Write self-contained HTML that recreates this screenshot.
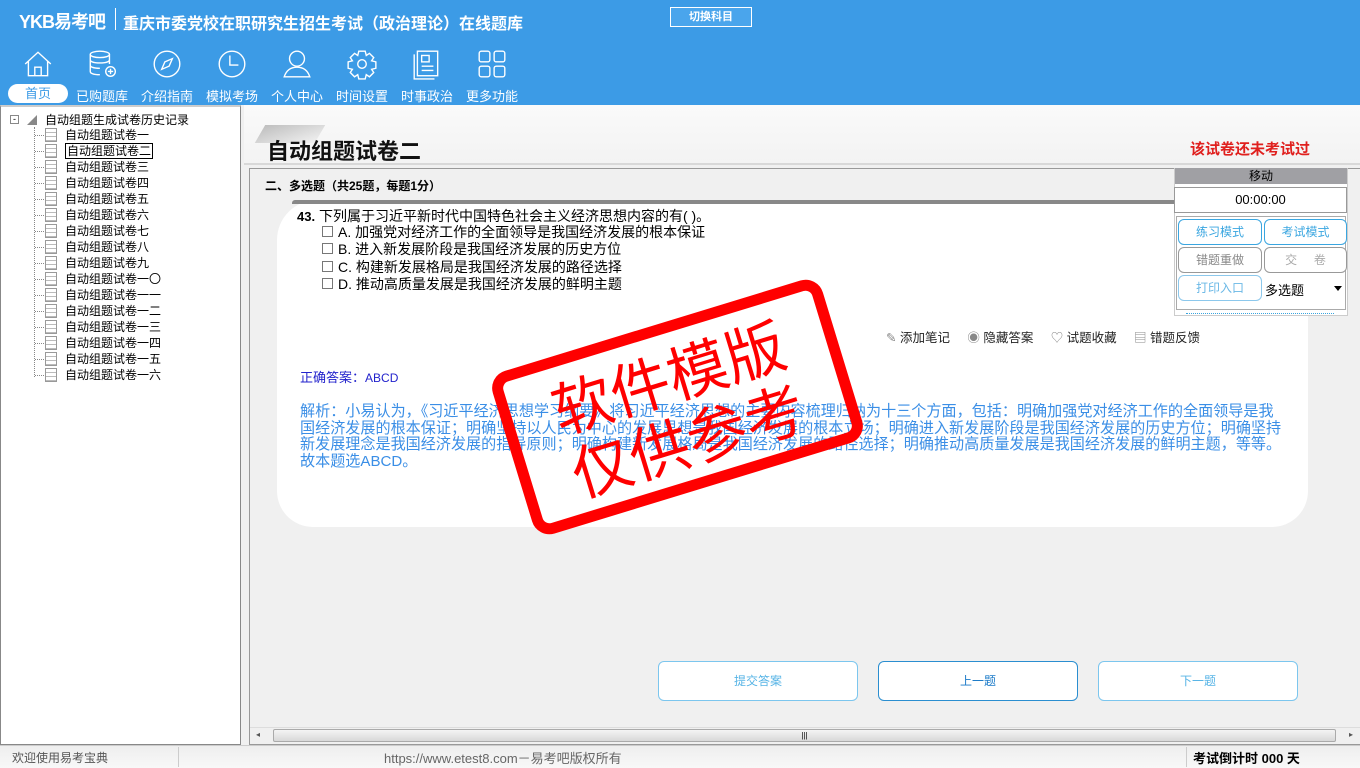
<!DOCTYPE html>
<html><head><meta charset="utf-8"><style>
*{margin:0;padding:0;box-sizing:border-box}
body{width:1360px;height:768px;overflow:hidden;position:relative;background:#f0f0f0;font-family:"Liberation Sans","Noto Sans CJK SC",sans-serif;font-size:12px;color:#000}
.abs{position:absolute}
#hdr{left:0;top:0;width:1360px;height:105px;background:#3c9be6;color:#fff}
.nav{position:absolute;top:48px;text-align:center;width:64px;font-size:13px}
.nav svg{display:block;margin:0 auto 6px;width:32px;height:32px}
#left{left:0;top:105px;width:241px;height:640px;background:#fff;border:1px solid #888;border-top:2px solid #ccc}
.tr{position:absolute;left:44px;font-size:12px;height:16px;line-height:16px;white-space:nowrap}
.tr i{display:inline-block;width:12px;height:14px;border:1px solid #999;background:repeating-linear-gradient(#fff 0 3px,#bbb 3px 4px);vertical-align:-3px;margin-right:8px}
.tr:before{content:"";position:absolute;left:-10px;top:8px;width:9px;border-top:1px dotted #888}
.btn{position:absolute;border:1px solid #3aa6e0;border-radius:6px;background:#fff;color:#3aa6e0;text-align:center;font-size:12px}
.ex{color:#3a8ee6;font-size:15.1px;white-space:nowrap;line-height:16.5px}
</style></head><body>
<div id="hdr" class="abs">
 <div class="abs" style="left:19px;top:8px;font-size:18px;font-weight:bold;letter-spacing:-1px">YKB易考吧</div>
 <div class="abs" style="left:115px;top:8px;width:1px;height:22px;background:#fff"></div>
 <div class="abs" style="left:123px;top:10px;font-size:16px;font-weight:bold">重庆市委党校在职研究生招生考试（政治理论）在线题库</div>
 <div class="abs" style="left:670px;top:7px;width:82px;height:20px;border:1px solid #fff;background:#4aa5ec;font-size:11px;text-align:center;line-height:18px;font-weight:bold">切换科目</div>
 <div class="abs" style="left:8px;top:84px;width:60px;height:19px;background:#fff;border-radius:10px;color:#3c9be6;text-align:center;line-height:19px;font-size:13px">首页</div>
 <div class="nav" style="left:6px"><svg viewBox="0 0 30 30" fill="none" stroke="#fff" stroke-width="1.3"><path d="M3 15L15 4l12 11M6 12.5V26h18V12.5M12 26v-8h6v8"/></svg><span style="visibility:hidden">首页</span></div>
 <div class="nav" style="left:70px"><svg viewBox="0 0 30 30" fill="none" stroke="#fff" stroke-width="1.3"><ellipse cx="13" cy="6" rx="9" ry="3"/><path d="M4 6v16c0 2 4 3 9 3M22 6v9M4 11c0 2 4 3 9 3s9-1 9-3M4 16c0 2 4 3 9 3"/><circle cx="23" cy="22" r="4.5"/><path d="M23 19.5v5M20.5 22h5"/></svg>已购题库</div>
 <div class="nav" style="left:135px"><svg viewBox="0 0 30 30" fill="none" stroke="#fff" stroke-width="1.3"><circle cx="15" cy="15" r="12"/><path d="M20 10l-3 7-7 3 3-7z"/></svg>介绍指南</div>
 <div class="nav" style="left:200px"><svg viewBox="0 0 30 30" fill="none" stroke="#fff" stroke-width="1.3"><circle cx="15" cy="15" r="12"/><path d="M13 7v9h8"/></svg>模拟考场</div>
 <div class="nav" style="left:265px"><svg viewBox="0 0 30 30" fill="none" stroke="#fff" stroke-width="1.3"><circle cx="15" cy="10" r="7"/><path d="M3 27c2-6 6-9 12-9s10 3 12 9z"/></svg>个人中心</div>
 <div class="nav" style="left:330px"><svg viewBox="0 0 30 30" fill="none" stroke="#fff" stroke-width="1.3"><path d="M12 3h6l1 4 3-2 4 4-2 3 4 1v6l-4 1 2 3-4 4-3-2-1 4h-6l-1-4-3 2-4-4 2-3-4-1v-6l4-1-2-3 4-4 3 2z"/><circle cx="15" cy="15" r="4"/></svg>时间设置</div>
 <div class="nav" style="left:395px"><svg viewBox="0 0 30 30" fill="none" stroke="#fff" stroke-width="1.3"><rect x="6" y="3" width="19" height="23"/><rect x="10" y="7" width="7" height="6"/><path d="M10 17h11M10 21h11M3 6v23h19"/></svg>时事政治</div>
 <div class="nav" style="left:460px"><svg viewBox="0 0 30 30" fill="none" stroke="#fff" stroke-width="1.3"><rect x="3" y="3" width="10" height="10" rx="2"/><rect x="17" y="3" width="10" height="10" rx="2"/><rect x="3" y="17" width="10" height="10" rx="2"/><rect x="17" y="17" width="10" height="10" rx="2"/></svg>更多功能</div>
</div>

<div id="left" class="abs">
 <div class="abs" style="left:9px;top:8px;width:9px;height:9px;border:1px solid #888;font-size:9px;line-height:7px;text-align:center">-</div>
 <div class="abs" style="left:26px;top:8px;width:0;height:0;border-left:10px solid transparent;border-bottom:10px solid #888"></div>
 <div class="abs" style="left:44px;top:4px;font-size:12px">自动组题生成试卷历史记录</div>
 <div class="abs" style="left:33px;top:20px;height:250px;border-left:1px dotted #888"></div>
 <div class="tr" style="top:20px"><i></i>自动组题试卷一</div>
 <div class="tr" style="top:36px"><i></i><span style="border:1px solid #000;padding:0 1px">自动组题试卷二</span></div>
 <div class="tr" style="top:52px"><i></i>自动组题试卷三</div>
 <div class="tr" style="top:68px"><i></i>自动组题试卷四</div>
 <div class="tr" style="top:84px"><i></i>自动组题试卷五</div>
 <div class="tr" style="top:100px"><i></i>自动组题试卷六</div>
 <div class="tr" style="top:116px"><i></i>自动组题试卷七</div>
 <div class="tr" style="top:132px"><i></i>自动组题试卷八</div>
 <div class="tr" style="top:148px"><i></i>自动组题试卷九</div>
 <div class="tr" style="top:164px"><i></i>自动组题试卷一〇</div>
 <div class="tr" style="top:180px"><i></i>自动组题试卷一一</div>
 <div class="tr" style="top:196px"><i></i>自动组题试卷一二</div>
 <div class="tr" style="top:212px"><i></i>自动组题试卷一三</div>
 <div class="tr" style="top:228px"><i></i>自动组题试卷一四</div>
 <div class="tr" style="top:244px"><i></i>自动组题试卷一五</div>
 <div class="tr" style="top:260px"><i></i>自动组题试卷一六</div>
</div>

<div class="abs" style="left:244px;top:105px;width:1116px;height:60px;background:linear-gradient(#fafafa,#f3f3f3);border-bottom:2px solid #d8d8d8"></div>
<div class="abs" style="left:260px;top:125px;width:60px;height:18px;background:linear-gradient(160deg,#999,#eee);transform:skewX(-30deg);opacity:.6"></div>
<div class="abs" style="left:267px;top:134px;font-size:22px;font-weight:bold;color:#111">自动组题试卷二</div>
<div class="abs" style="left:1190px;top:138px;font-size:15px;font-weight:bold;color:#e0201e">该试卷还未考试过</div>

<div class="abs" style="left:249px;top:168px;width:1111px;height:577px;border:1px solid #999;border-right:none;background:#f0f0f0"></div>
<div class="abs" style="left:265px;top:177px;font-size:12px;font-weight:bold">二、多选题（共25题，每题1分）</div>
<div class="abs" style="left:277px;top:200px;width:1031px;height:327px;background:#fff;border-radius:40px 10px 36px 36px"></div>
<div class="abs" style="left:292px;top:200px;width:1016px;height:4px;background:#888;border-radius:3px 0 0 0"></div>
<div class="abs" style="left:297px;top:206px;font-size:14px"><b style="font-size:13px">43.</b> 下列属于习近平新时代中国特色社会主义经济思想内容的有( )。</div>
<div class="abs" style="left:322px;top:224px;font-size:14px;line-height:17.3px">
 <div><span style="display:inline-block;width:11px;height:11px;border:1px solid #777;margin-right:5px"></span>A. 加强党对经济工作的全面领导是我国经济发展的根本保证</div>
 <div><span style="display:inline-block;width:11px;height:11px;border:1px solid #777;margin-right:5px"></span>B. 进入新发展阶段是我国经济发展的历史方位</div>
 <div><span style="display:inline-block;width:11px;height:11px;border:1px solid #777;margin-right:5px"></span>C. 构建新发展格局是我国经济发展的路径选择</div>
 <div><span style="display:inline-block;width:11px;height:11px;border:1px solid #777;margin-right:5px"></span>D. 推动高质量发展是我国经济发展的鲜明主题</div>
</div>
<div class="abs" style="left:886px;top:327px;font-size:12.5px;color:#222;white-space:nowrap">
 <span style="color:#888">✎</span> 添加笔记 &nbsp;&nbsp;&nbsp;&nbsp;<span style="color:#888">◉</span> 隐藏答案 &nbsp;&nbsp;&nbsp;&nbsp;<span style="color:#888">♡</span> 试题收藏 &nbsp;&nbsp;&nbsp;&nbsp;<span style="color:#888">▤</span> 错题反馈</div>
<div class="abs" style="left:300px;top:367px;font-size:13px;color:#2222cc">正确答案：<span style="font-size:12px">ABCD</span></div>
<div class="abs ex" style="left:300px;top:404px">解析：小易认为，《习近平经济思想学习纲要》将习近平经济思想的主要内容梳理归纳为十三个方面，包括：明确加强党对经济工作的全面领导是我<br>国经济发展的根本保证；明确坚持以人民为中心的发展思想是我国经济发展的根本立场；明确进入新发展阶段是我国经济发展的历史方位；明确坚持<br>新发展理念是我国经济发展的指导原则；明确构建新发展格局是我国经济发展的路径选择；明确推动高质量发展是我国经济发展的鲜明主题，等等。<br>故本题选ABCD。</div>

<div class="abs" style="left:505px;top:322px;width:345px;height:170px;border:11px solid #f00;border-radius:18px;transform:rotate(-17deg);transform-origin:center;color:#f00;text-align:center;font-size:60px;line-height:66px;font-family:'Noto Sans CJK SC',sans-serif;padding-top:8px">软件模版<br>仅供参考</div>

<div class="abs" style="left:1174px;top:168px;width:174px;height:148px;background:#fff;border:1px solid #ccc"></div>
<div class="abs" style="left:1175px;top:168px;width:172px;height:16px;background:#a0a0a4;text-align:center;font-size:12px;line-height:16px">移动</div>
<div class="abs" style="left:1174px;top:187px;width:173px;height:26px;border:1px solid #999;text-align:center;line-height:24px;font-size:13px">00:00:00</div>
<div class="abs" style="left:1176px;top:216px;width:170px;height:94px;border:1px solid #aaa"></div>
<div class="btn" style="left:1178px;top:219px;width:84px;height:26px;line-height:24px">练习模式</div>
<div class="btn" style="left:1264px;top:219px;width:83px;height:26px;line-height:24px">考试模式</div>
<div class="btn" style="left:1178px;top:247px;width:84px;height:26px;line-height:24px;border-color:#999;color:#888">错题重做</div>
<div class="btn" style="left:1264px;top:247px;width:83px;height:26px;line-height:24px;border-color:#999;color:#aaa">交 &nbsp;&nbsp;&nbsp;&nbsp;卷</div>
<div class="btn" style="left:1178px;top:275px;width:84px;height:26px;line-height:24px;border-color:#8cc8ec;color:#6ab8e6">打印入口</div>
<div class="abs" style="left:1265px;top:280px;font-size:13px">多选题</div>
<div class="abs" style="left:1334px;top:286px;border-left:4px solid transparent;border-right:4px solid transparent;border-top:5px solid #000"></div>
<div class="abs" style="left:1186px;top:313px;width:148px;border-top:1px dotted #3aa6e0"></div>

<div class="btn" style="left:658px;top:661px;width:200px;height:40px;line-height:38px;color:#57b4e6;border-color:#7cc6ee">提交答案</div>
<div class="btn" style="left:878px;top:661px;width:200px;height:40px;line-height:38px;color:#1a7ac8;border-color:#2a8ed0">上一题</div>
<div class="btn" style="left:1098px;top:661px;width:200px;height:40px;line-height:38px;color:#57b4e6;border-color:#7cc6ee">下一题</div>

<div class="abs" style="left:250px;top:727px;width:1110px;height:17px;background:#f0f0f0;border-top:1px solid #ddd"></div>
<div class="abs" style="left:273px;top:729px;width:1063px;height:13px;background:linear-gradient(#f4f4f4,#d8d8d8);border:1px solid #aaa;border-radius:2px;text-align:center;font-size:8px;line-height:11px">|||</div>
<div class="abs" style="left:256px;top:730px;font-size:8px;color:#555">◂</div>
<div class="abs" style="left:1349px;top:730px;font-size:8px;color:#555">▸</div>

<div class="abs" style="left:0;top:745px;width:1360px;height:23px;background:linear-gradient(#eee,#f8f8f8);border-top:1px solid #ccc"></div>
<div class="abs" style="left:12px;top:749px;font-size:12px;color:#555">欢迎使用易考宝典</div>
<div class="abs" style="left:178px;top:747px;height:20px;border-left:1px solid #ccc"></div>
<div class="abs" style="left:384px;top:748px;font-size:13px;color:#666">https://www.etest8.com－易考吧版权所有</div>
<div class="abs" style="left:1186px;top:747px;height:20px;border-left:1px solid #ccc"></div>
<div class="abs" style="left:1193px;top:748px;font-size:13px;font-weight:bold">考试倒计时 000 天</div>
</body></html>
